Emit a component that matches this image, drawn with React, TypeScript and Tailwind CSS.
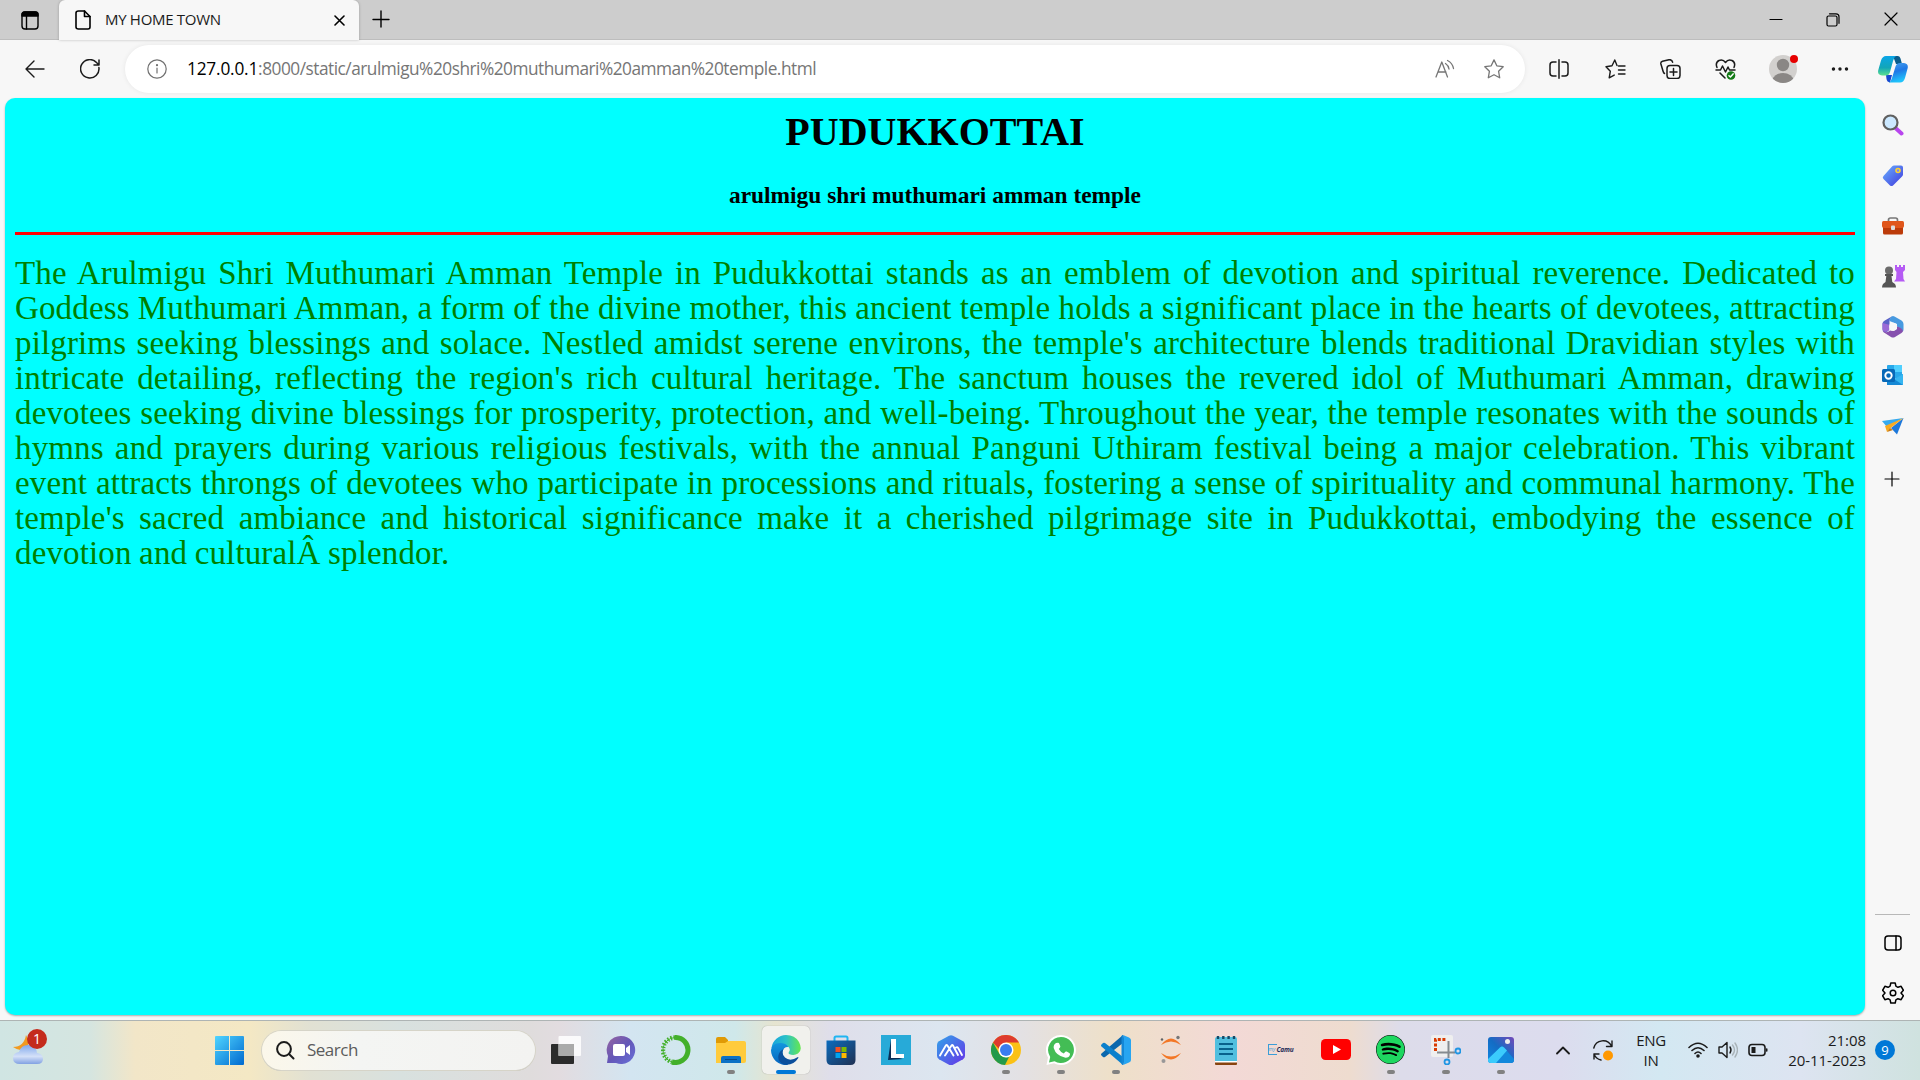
import React from "react";
import { FaSpotify } from "react-icons/fa";

const lines = [
  "The Arulmigu Shri Muthumari Amman Temple in Pudukkottai stands as an emblem of devotion and spiritual reverence. Dedicated to",
  "Goddess Muthumari Amman, a form of the divine mother, this ancient temple holds a significant place in the hearts of devotees, attracting",
  "pilgrims seeking blessings and solace. Nestled amidst serene environs, the temple's architecture blends traditional Dravidian styles with",
  "intricate detailing, reflecting the region's rich cultural heritage. The sanctum houses the revered idol of Muthumari Amman, drawing",
  "devotees seeking divine blessings for prosperity, protection, and well-being. Throughout the year, the temple resonates with the sounds of",
  "hymns and prayers during various religious festivals, with the annual Panguni Uthiram festival being a major celebration. This vibrant",
  "event attracts throngs of devotees who participate in processions and rituals, fostering a sense of spirituality and communal harmony. The",
  "temple's sacred ambiance and historical significance make it a cherished pilgrimage site in Pudukkottai, embodying the essence of",
];

type IconProps = {
  w?: number;
  h?: number;
  vb?: string;
  sw?: number;
  className?: string;
  children: React.ReactNode;
};

function Line({ w = 20, h = 20, vb, sw = 1.4, className = "", children }: IconProps) {
  return (
    <svg
      width={w}
      height={h}
      viewBox={vb ?? `0 0 ${w} ${h}`}
      fill="none"
      stroke="currentColor"
      strokeWidth={sw}
      strokeLinecap="round"
      strokeLinejoin="round"
      className={`block shrink-0 ${className}`}
    >
      {children}
    </svg>
  );
}

function Art({ w = 30, h = 30, vb, className = "", children }: IconProps) {
  return (
    <svg width={w} height={h} viewBox={vb ?? `0 0 ${w} ${h}`} className={`block shrink-0 ${className}`}>
      {children}
    </svg>
  );
}

const star = "M10 .9l2.8 5.9 6.4.9-4.6 4.6 1.1 6.5-5.7-3.1-5.7 3.1 1.1-6.5L.8 7.7l6.4-.9z";

function TabStrip() {
  return (
    <div className="flex h-10 shrink-0 bg-[#cdcdcd] shadow-[inset_0_-1px_0_#bdbdbd]">
      <Line w={18} h={19} className="mt-[11px] ml-[21px]">
        <rect x="1" y="1" width="16" height="17" rx="3" />
        <path d="M1 5V3.500Q1 1 3.500 1h11Q17 1 17 3.500V5z" fill="currentColor" />
        <path d="M5.500 5v13" />
      </Line>
      <div className="ml-5 flex h-10 w-[300px] rounded-t-[6px] bg-[#f7f7f7] shadow-[0_0_3px_rgba(0,0,0,0.25)]">
        <Line w={16} h={20} sw={1.6} className="mt-[10px] ml-4">
          <path d="M3.500 1H9.500L15 6.500V17Q15 19 13 19H3.500Q1 19 1 17V3Q1 1 3.500 1z" />
          <path d="M9.500 1V6.500H15" />
        </Line>
        <div className="ml-[14px] w-[229px] font-['Open_Sans'] text-[15px] leading-[39px] tracking-[-0.3px] whitespace-nowrap text-[#1b1b1b]">
          MY HOME TOWN
        </div>
        <Line w={11} h={11} sw={1.6} className="mt-[15px]">
          <path d="M1 1l9 9M10 1l-9 9" />
        </Line>
      </div>
      <Line w={18} h={18} className="mt-[10px] ml-[13px]">
        <path d="M9 1v16M1 9.500h16" />
      </Line>
      <div className="grow" />
      <Line w={14} h={14} className="mt-3 mr-[43px]" sw={1.2}>
        <path d="M1 7.500h12" />
      </Line>
      <Line w={14} h={14} className="mt-[13px] mr-[44px]" sw={1.2}>
        <rect x="1" y="3" width="10" height="10" rx="1.500" />
        <path d="M3.500 .8h6.500q3 0 3 3v6.500" />
      </Line>
      <Line w={14} h={14} className="mt-[12px] mr-[22px]" sw={1.2}>
        <path d="M1 1l12 12M13 1L1 13" />
      </Line>
    </div>
  );
}

function Toolbar() {
  return (
    <div className="flex h-[58px] shrink-0 items-center text-[#1b1b1b]">
      <Line w={20} h={18} className="ml-[25px]">
        <path d="M19 9H1M9 1L1 9l8 8" />
      </Line>
      <Line className="ml-[35px]" sw={1.5}>
        <path d="M18.900 8.500A9.200 9.200 0 1 1 16.500 3.500L19 6M19 1v5h-5" />
      </Line>
      <div className="ml-[25px] flex h-12 w-[1400px] items-center rounded-full bg-white shadow-[0_0_5px_rgba(0,0,0,0.07)]">
        <Line className="ml-[22px] text-[#707070]" sw={1.2}>
          <circle cx="10" cy="10" r="9.200" />
          <path d="M10 9v5" />
          <circle cx="10" cy="6.200" r=".5" fill="currentColor" />
        </Line>
        <div className="ml-5 w-[1248px] font-['Open_Sans'] text-[17.3px] leading-6 tracking-[-0.5px] whitespace-nowrap text-[#767676]">
          <span className="tracking-[-0.2px] text-black">127.0.0.1</span>:8000/static/arulmigu%20shri%20muthumari%20amman%20temple.html
        </div>
        <Line w={20} h={20} className="text-[#767676]" sw={1.3}>
          <path d="M1 18L6.800 3 12.500 18M3 13h8M10.500 4.500q3 2 3.500 5.500M12.500 1.500q5 2.500 6 8" />
        </Line>
        <Line w={20} h={20} className="ml-[29px] text-[#767676]" sw={1.3}>
          <path d={star} />
        </Line>
      </div>
      <Line w={20} h={20} className="ml-[24px]" sw={1.5}>
        <path d="M7 3H4Q1 3 1 6v8q0 3 3 3h3M10 .8v18.400M13 3h3q3 0 3 3v8q0 3-3 3h-3" />
      </Line>
      <Line w={21} h={20} className="ml-[36px]" sw={1.4}>
        <path d="M12 6.500L9.800 1 7 6.800l-6 .9 4.300 4.600-1.100 6.500 5-2.700M13.500 7H20M13.500 11H20M13.500 15H20" />
      </Line>
      <Line w={21} h={20} className="ml-[34px]" sw={1.5}>
        <rect x="7" y="6.500" width="13" height="13" rx="3" />
        <path d="M13.500 9.500v7M10 13h7M4.500 14.500Q3.500 14 3 12L.9 5Q.4 3 2.500 2.300L9 .7Q12 .4 12.600 3.200" />
      </Line>
      <Line w={21} h={21} className="ml-[34px]" sw={1.5}>
        <path d="M2 8.500Q0 3.500 4 1.500q4-1.500 6.500 2 2.500-3.500 6.500-2 4 2 2 7M1 11h4.500l2-4 3 6 2.500-5 1.500 3H20M5 14l5 5" />
        <circle cx="16" cy="16.500" r="4.300" fill="#137a16" stroke="none" />
        <path d="M14 16.700l1.400 1.200 2.700-3" stroke="white" />
      </Line>
      <div className="relative ml-[33px]">
        <Art w={28} h={28}>
          <clipPath id="avatar"><circle cx="14" cy="14" r="14" /></clipPath>
          <g clipPath="url(#avatar)">
            <rect width="28" height="28" fill="#d2d0ce" />
            <circle cx="14" cy="10" r="6.200" fill="#8a8785" />
            <ellipse cx="14" cy="25.500" rx="10.500" ry="7.500" fill="#8a8785" />
          </g>
        </Art>
        <span className="absolute top-0 left-[21px] size-2 rounded-full bg-[#e60000]" />
      </div>
      <Line w={18} h={6} className="ml-[34px]">
        <circle cx="2.500" cy="3" r="1" fill="currentColor" />
        <circle cx="9" cy="3" r="1" fill="currentColor" />
        <circle cx="15.500" cy="3" r="1" fill="currentColor" />
      </Line>
      <Art w={30} h={27} className="ml-[29px]">
        <defs>
          <linearGradient id="cpA" x1="0" y1="0" x2="0" y2="1">
            <stop offset="0" stopColor="#0aa5e8" /><stop offset=".6" stopColor="#12a6b8" /><stop offset="1" stopColor="#5ce08e" />
          </linearGradient>
          <linearGradient id="cpB" x1="0" y1="0" x2=".3" y2="1">
            <stop offset="0" stopColor="#4aa4ee" /><stop offset=".5" stopColor="#1f78e6" /><stop offset="1" stopColor="#1fc3fb" />
          </linearGradient>
        </defs>
        <path d="M15 0h5q2 0 2.500 2.500L24 8h-6z" fill="#0a5d8c" />
        <path d="M8 19h6l-2 7.500Q9 26 8.500 23z" fill="#1748cf" />
        <path d="M8 0h10q-2 1-3 5l-3 11q-1 3.500-4 3.500H4Q-1 19 .3 14L3 4.500Q4.500 0 8 0z" fill="url(#cpA)" />
        <path d="M22 26.500H11q2-1 3-4.500l3.500-11.500Q18.500 7 22 7h4q4.500.5 3.700 5L27 22q-1.500 4.500-5 4.500z" fill="url(#cpB)" />
      </Art>
    </div>
  );
}

function SideIcons() {
  const cell = "flex h-[50px] shrink-0 items-center justify-center";
  return (
    <div className="flex w-[54px] shrink-0 flex-col pl-px">
      <div className={cell}>
        <Art w={22} h={22} className="mt-1">
          <path d="M14 14.500l5.500 5" stroke="#b845ee" strokeWidth="4" strokeLinecap="round" />
          <circle cx="8.500" cy="8.500" r="7" fill="#cbe8ff" stroke="#606060" strokeWidth="2.200" />
        </Art>
      </div>
      <div className={cell}>
        <Art w={22} h={22} className="mt-[6px]">
          <defs><linearGradient id="tag" x1="0" y1="0" x2="1" y2="1"><stop stopColor="#69b2ff" /><stop offset="1" stopColor="#4038dc" /></linearGradient></defs>
          <path d="M12 .5h7q2 0 2 2v7q0 1-1 2L11 20.500q-1.500 1-3 0L1.500 14Q0 12.500 1.500 11L10 1.500q1-1 2-1z" fill="url(#tag)" />
          <circle cx="16" cy="5.500" r="2" fill="#7686ff" stroke="#ffd12e" strokeWidth="1.600" />
        </Art>
      </div>
      <div className={cell}>
        <Art w={22} h={18} className="mt-[6px]">
          <path d="M6.500 5V3q0-2 2-2h5q2 0 2 2v2" fill="none" stroke="#777" strokeWidth="1.700" />
          <rect x="1" y="7" width="20" height="10.500" rx="1.500" fill="#bc3b0a" />
          <path d="M0 5.500Q0 4 1.500 4h19Q22 4 22 5.500V9q0 2-2 2H2q-2 0-2-2z" fill="#e0561b" />
          <rect x="9" y="8.500" width="4" height="4.500" rx="1" fill="#ddd" />
        </Art>
      </div>
      <div className={cell}>
        <Art w={24} h={24} className="mt-[5px]">
          <path d="M14 1h2v2h2V1h2v2h2V1h2v5l-2 2 .5 7 1.500 2.500H13L15 15l.5-7L14 6z" fill="#b55bf4" />
          <circle cx="8" cy="6.500" r="4" fill="#6b6b6b" />
          <path d="M4 10h8v2h-1.500l.8 6L14 20q1 1.500 1 3.500H1Q1 21.500 2 20l2.500-2 .8-6H4z" fill="#555" />
        </Art>
      </div>
      <div className={cell}>
        <Art w={22} h={23} className="mt-[6px]">
          <path d="M10.500 1L2 6Q.5 7 .5 9v5.500q0 2 1.500 2.500 2 .6 3.500-.5 2.200-1.500 2-4V6.500Q7.500 3 10.500 1z" fill="#5a62c8" />
          <path d="M9.500 1.500q1.500-1 3 0l7 4q2 1.200 2 3.500v5.500q0 1.500-.8 2.300Q19 13 15 11.500V9L7.500 6Q7.500 3 9.500 1.500z" fill="#479ae0" />
          <path d="M15 11.500q5 1 6 4.500-.2 1-1.500 2l-6.500 4q-2 1-4 0L2 17.500q-.8-.5-1-1.500 4 2.500 7-.5l3.500.5 3.500-2z" fill="#8650ae" />
          <path d="M.5 14q.5 3.500 4 2.500 3-1 3-4l.5-2.500L.5 8z" fill="#9b6ad6" />
          <circle cx="11" cy="11.700" r="4" fill="#f7f7f7" />
        </Art>
      </div>
      <div className={cell}>
        <Art w={21} h={21} className="mt-[5px]">
          <rect x="5" y="0" width="15" height="13" rx="1" fill="#28a8ea" />
          <path d="M12 0h8v7h-8z" fill="#50d0ff" />
          <path d="M5 9l8 5 8-5v11H5z" fill="#1588d5" /><path d="M21 9v11l-9-6z" fill="#36b6f1" />
          <rect x="0" y="4" width="13" height="13" rx="1.500" fill="#0869b8" />
          <circle cx="6.500" cy="10.500" r="3.200" fill="none" stroke="white" strokeWidth="1.900" />
        </Art>
      </div>
      <div className={cell}>
        <Art w={22} h={17} className="mt-[6px]">
          <path d="M0 3L21.500 0 5 9z" fill="#35aaf0" /><path d="M21.500 0L15 16.500 9 10z" fill="#1d78da" />
          <path d="M3 8L21.500 0 8 10.500 5 14z" fill="#f7aa20" /><path d="M5 14l3-4 3 2z" fill="#c87912" />
        </Art>
      </div>
      <div className="flex h-[62px] items-center justify-center">
        <Line w={16} h={16} className="-ml-px" sw={1.2}><path d="M8 1v14M1 8h14" /></Line>
      </div>
      <div className="grow" />
      <div className="ml-[9px] h-px w-[35px] shrink-0 bg-[#b8b8b8]" />
      <Line w={18} h={16} className="mt-5 ml-[18px]" sw={1.5}>
        <rect x="1" y="1" width="16" height="14" rx="3" /><path d="M12 1v14" />
      </Line>
      <Line w={22} h={22} vb="1 1 22 22" className="mt-[31px] mb-[16px] ml-[16px]" sw={1.5}>
        <path d="M9.800 2h4.400l.7 3.200 2 1.100 3.200-1 2.300 4-2.400 2.700 2.400 2.700-2.300 4-3.200-1-2 1.100-.7 3.200H9.800l-.7-3.200-2-1.100-3.200 1-2.300-4L4 12 1.600 9.300l2.300-4 3.200 1 2-1.100z" />
        <circle cx="12" cy="12" r="2.800" />
      </Line>
    </div>
  );
}

function PageView() {
  return (
    <main className="ml-[5px] h-[917px] w-[1860px] shrink-0 overflow-hidden rounded-[10px] bg-[#00ffff] px-[10px] font-['Liberation_Serif',serif] text-black shadow-[0_1px_2px_rgba(0,0,0,0.3)]">
      <h1 className="mt-[11px] h-[46px] text-center text-[40px] leading-[46px] font-bold">PUDUKKOTTAI</h1>
      <h3 className="mt-[27px] h-[27px] text-center text-[23.4px] leading-[27px] font-bold">arulmigu shri muthumari amman temple</h3>
      <div className="mt-[23px] h-[3px] bg-[#ff0000]" />
      <div className="mt-[21px] text-[33px] leading-[35px] tracking-[0.14px] text-[#008000] [word-spacing:-0.9px]">
        {lines.map((line) => (
          <div key={line} className="h-[35px] whitespace-nowrap [text-align-last:justify]">{line}</div>
        ))}
        <div className="h-[35px]">devotion and culturalÂ splendor.</div>
      </div>
    </main>
  );
}

function AppCell({ children, run, active }: { children: React.ReactNode; run?: boolean; active?: boolean }) {
  return (
    <div className="relative flex h-[59px] w-[55px] shrink-0 items-center justify-center pb-px">
      <div className={active ? "flex size-12 items-center justify-center rounded-[5px] bg-[#f1f1ed] shadow-[0_0_1px_rgba(0,0,0,0.35)]" : "flex size-12 items-center justify-center"}>
        {children}
      </div>
      {run && <span className="absolute bottom-[6px] h-1 w-2 rounded-full bg-[#818181]" />}
      {active && <span className="absolute bottom-[6px] h-1 w-5 rounded-full bg-[#0078d7]" />}
    </div>
  );
}

function AppIcons() {
  return (
    <>
      <AppCell>
        <Art>
          <rect x="0" y="9" width="23" height="20" rx="1" fill="#2b2b2b" />
          <rect x="7.500" y="1" width="22.500" height="20" rx="1" fill="#fff" opacity=".85" />
          <path d="M7.500 9H23v12H7.500z" fill="#aaa" />
        </Art>
      </AppCell>
      <AppCell>
        <Art>
          <defs><linearGradient id="chat" x1="0" y1="0" x2="1" y2="1"><stop stopColor="#97649f" /><stop offset=".5" stopColor="#6457b8" /><stop offset="1" stopColor="#6870da" /></linearGradient></defs>
          <path d="M15 1a14 14 0 1 1-5 27H1l1-7A14 14 0 0 1 15 1z" fill="url(#chat)" />
          <rect x="7" y="9" width="12" height="12" rx="2" fill="#fff" /><path d="M20 13l4-3v10l-4-3z" fill="#fff" />
        </Art>
      </AppCell>
      <AppCell>
        <Art>
          <path d="M14 2.500A12.500 12.500 0 1 1 11 27" fill="none" stroke="#43b02a" strokeWidth="5" />
          <path d="M14 2.500A12.500 12.500 0 0 0 11 27" fill="none" stroke="#43b02a" strokeWidth="4.500" strokeDasharray="1.500 1.600" />
          <path d="M14 2.500A12.500 12.500 0 0 0 11 27" fill="none" stroke="#43b02a" strokeWidth="1" />
        </Art>
      </AppCell>
      <AppCell run>
        <Art>
          <path d="M0 4q0-2 2-2h7l3 3v5H0z" fill="#e09a05" />
          <path d="M0 8h9l3-2h16q2 0 2 2v18q0 2-2 2H0z" fill="#ffcb3c" />
          <path d="M5 28v-5q0-2 2-2h16q2 0 2 2v5z" fill="#0b71c5" /><path d="M9 24.500h12" stroke="#084a88" />
        </Art>
      </AppCell>
      <AppCell active>
        <Art>
          <defs>
            <linearGradient id="edA"><stop stopColor="#16a2df" /><stop offset=".5" stopColor="#2cc2c8" /><stop offset="1" stopColor="#65e84e" /></linearGradient>
            <linearGradient id="edB" x1="0" y1="0" x2="0" y2="1"><stop stopColor="#1396de" /><stop offset="1" stopColor="#0764be" /></linearGradient>
          </defs>
          <path d="M.5 13A15 15 0 0 1 15 0q9 0 13 7 4 8-1 11.500-4 2.500-9 .5-1-1 .5-3 1-3-2-5Q8 7 .5 13z" fill="url(#edA)" />
          <path d="M0 15q1-7 9-7 6 0 8.500 4-5-.5-6 5-.5 7 6 10l-1 3A15 15 0 0 1 0 15z" fill="url(#edB)" />
          <path d="M12.500 14q-2.500 5 1.500 8.500 5 4.500 13-.5.700 0 .3 1-5 8-14.300 6.500Q6 27 7.500 20q1-4 5-6z" fill="#0b4f9c" />
        </Art>
      </AppCell>
      <AppCell>
        <Art>
          <defs><linearGradient id="store" x1="0" y1="0" x2="1" y2="1"><stop stopColor="#0b6cbe" /><stop offset="1" stopColor="#203052" /></linearGradient></defs>
          <path d="M8.500 6V3q0-1.500 1.500-1.500h10q1.500 0 1.500 1.500v3" fill="none" stroke="#20b5f2" strokeWidth="2" />
          <path d="M.5 5.500h29V25q0 5-5 5h-19q-5 0-5-5z" fill="url(#store)" />
          <path d="M9.500 12h5v5h-5z" fill="#f25022" /><path d="M15.500 12h5v5h-5z" fill="#7fba00" /><path d="M9.500 18h5v5h-5z" fill="#00a4ef" /><path d="M15.500 18h5v5h-5z" fill="#ffb900" />
        </Art>
      </AppCell>
      <AppCell>
        <Art>
          <rect width="30" height="30" fill="#27aad8" />
          <path d="M10 4L7 25l15-1-12-3z" fill="#0a2d55" /><path d="M10 4h5v15h8v4H10z" fill="#fff" />
        </Art>
      </AppCell>
      <AppCell>
        <Art>
          <defs><linearGradient id="mm" x1="0" y1="0" x2="1" y2="1"><stop stopColor="#31a5e9" /><stop offset="1" stopColor="#6732e8" /></linearGradient></defs>
          <path d="M13 .7q2-1 4 0l10 5.500q2 1.300 2 3.500v11q0 2-2 3.500l-10 5.500q-2 1-4 0L3 24.200q-2-1.300-2-3.500v-11Q1 7.500 3 6.200z" fill="url(#mm)" />
          <path d="M4 20.500L9.800 10.500q.8-1 1.600 0L17.500 20.500M9 20.500l6.500-10q.8-1 1.500 0L22 20M20 12.500q1.300-1 2.200.6L26 20" fill="none" stroke="#fff" strokeWidth="1.900" strokeLinecap="round" />
        </Art>
      </AppCell>
      <AppCell run>
        <Art>
          <circle cx="15" cy="15" r="15" fill="#fbc116" />
          <path d="M2 7.500A15 15 0 0 1 28 7.500H15v14z" fill="#de3b2e" />
          <path d="M2 7.500L8.500 19q3 4 9.500 3l-4 8A15 15 0 0 1 2 7.500z" fill="#249a4b" />
          <circle cx="15" cy="15" r="7.500" fill="#fff" /><circle cx="15" cy="15" r="6" fill="#3a7df0" />
        </Art>
      </AppCell>
      <AppCell run>
        <Art>
          <path d="M15 0A15 15 0 1 1 8 28.300L.5 30l1.500-7.500A15 15 0 0 1 15 0z" fill="#fff" />
          <path d="M15 2A13 13 0 1 1 8.500 26.300L3 27.500l1.200-5.500A13 13 0 0 1 15 2z" fill="#43bd55" />
          <path d="M10 8l2-.3q1 0 1.300 1l1 2.500q.2.700-.5 1.500l-1 1.200q2 3.500 5 4.600l1.500-1.700q.6-.6 1.400-.2l2.600 1.300q1 .5.700 1.500-.8 3.300-4.500 3.300Q10 21 7.700 13 7.300 9.500 10 8z" fill="#fff" />
        </Art>
      </AppCell>
      <AppCell run>
        <Art>
          <path d="M22 0v8L4 22q-1 .5-2 0l-1.500-1.500q-1-1 0-2z" fill="#0a67ad" />
          <path d="M22 30v-8L4 8Q3 7.500 2 8L.5 9.500q-1 1 0 2z" fill="#0b80cc" />
          <path d="M22 0l6 2.500Q30 3.500 30 5v20q0 1.500-2 2.500L22 30q1-1 1-3V3q0-2-1-3z" fill="#27a5f1" />
          <path d="M22 0q1 1 1 3v24q0 2-1 3-.8 0-1.500-1V1q.7-1 1.500-1z" fill="#1387d6" />
        </Art>
      </AppCell>
      <AppCell>
        <Art w={24} h={28} className="mt-[-1px]">
          <path d="M2 10q10-13 20 0-10-7-20 0zM2 18q10 7 20 0-10 13-20 0z" fill="#f37726" />
          <circle cx="19" cy="2.500" r="1.700" fill="#767677" /><circle cx="3" cy="4.500" r="1.200" fill="#616262" /><circle cx="4.500" cy="26" r="2" fill="#989798" />
        </Art>
      </AppCell>
      <AppCell>
        <Art w={24} h={30}>
          <rect x="1" y="2" width="22" height="26" rx="2" fill="#50bfdf" />
          <path d="M1 27h22v2q0 1-1 1H2q-1 0-1-1z" fill="#87430f" /><path d="M1 26h22v1.500H1z" fill="#fff" />
          <path d="M5 9h14M5 14h14M5 19h14" stroke="#08628c" strokeWidth="1.800" />
          <path d="M4 1v3M9.300 1v3M14.600 1v3M20 1v3" stroke="#144a68" strokeWidth="2.400" />
        </Art>
      </AppCell>
      <AppCell>
        <div className="flex items-center">
          <div className="flex h-[11px] w-[9px] items-center border border-r-0 border-[#3a9dd8] font-['Open_Sans'] text-[5px] leading-none text-[#3a9dd8] italic">my</div>
          <span className="font-['Open_Sans'] text-[6.5px] leading-[11px] font-bold tracking-[-0.2px] text-[#232a55] italic">Camu</span>
        </div>
      </AppCell>
      <AppCell>
        <Art w={30} h={22}>
          <rect width="30" height="21" rx="4.500" fill="#f00" /><path d="M12 6l8 4.500-8 4.500z" fill="#fff" />
        </Art>
      </AppCell>
      <AppCell run>
        <div className="rounded-full bg-black"><FaSpotify className="size-[29px] text-[#1ed760]" /></div>
      </AppCell>
      <AppCell run>
        <Art>
          <rect x="0" y="0" width="22" height="22" rx="2" fill="#efefef" />
          <path d="M4.500 16V4.500H16" fill="none" stroke="#da3b01" strokeWidth="3" strokeDasharray="3 1.600" />
          <path d="M17.500 6v17M6 17.500h18" stroke="#858b90" strokeWidth="2" />
          <circle cx="27" cy="16" r="2.500" fill="none" stroke="#2196e3" strokeWidth="1.800" /><circle cx="16" cy="27" r="2.500" fill="none" stroke="#2196e3" strokeWidth="1.800" />
        </Art>
      </AppCell>
      <AppCell run>
        <Art w={26} h={26}>
          <defs><linearGradient id="ph" x1="0" y1="1" x2="1" y2="0"><stop stopColor="#0f87e2" /><stop offset=".5" stopColor="#146cc4" /><stop offset="1" stopColor="#7549b8" /></linearGradient></defs>
          <rect width="26" height="26" rx="3" fill="url(#ph)" />
          <path d="M1 24L12 10.500q2-2 4 0L26 22v2q-1 2-3 2H3q-2 0-2-2z" fill="#1288dc" />
          <path d="M0 22L12 10.500q2-2 4 0l3 3L8 26H3q-3 0-3-3z" fill="#3bcbfc" />
          <circle cx="19.500" cy="4.500" r="2.500" fill="#eee" />
        </Art>
      </AppCell>
    </>
  );
}

function Taskbar() {
  return (
    <footer className="flex h-[60px] shrink-0 items-center border-t border-[#aeb4b4] bg-[linear-gradient(90deg,#d0e5e3_0px,#d5e5e0_90px,#f2e6c8_135px,#f4e8c4_250px,#e1e1d3_310px,#d8e1df_400px,#dfdcdc_530px,#e2dce0_560px,#d3e5f1_630px,#cfe8ea_735px,#e6e4d0_775px,#dfdeea_830px,#dce6f0_940px,#e3e1e4_1020px,#eee0c9_1110px,#f3d9d6_1230px,#eedccf_1350px,#dddcea_1400px,#dcdcee_1560px,#d3e8f2_1660px,#dde4f1_1800px,#cfe2df_1920px)] pb-px text-[#1b1b1b]">
      <div className="relative ml-[13px]">
        <Art w={30} h={30}>
          <defs><linearGradient id="cloud" x1="0" y1="0" x2="0" y2="1"><stop stopColor="#81a9ec" /><stop offset=".6" stopColor="#d4e0f8" /><stop offset="1" stopColor="#81a1e2" /></linearGradient></defs>
          <path d="M13 0q5 8 0 14Q7 17 0 12q11 0 13-12z" fill="#f29a20" />
          <path d="M7 29q-7 0-7-6 0-5 6-6 2-7 9-7 8 0 9 8 6 1 6 6 0 5-6 5z" fill="url(#cloud)" />
        </Art>
        <span className="absolute -top-[6px] left-[14px] size-5 rounded-full bg-[#c42b1c] text-center font-['Open_Sans'] text-[14px] leading-5 text-white">1</span>
      </div>
      <Art w={29} h={29} className="ml-[172px]">
        <defs><linearGradient id="win" gradientUnits="userSpaceOnUse" x1="0" y1="0" x2="29" y2="29"><stop stopColor="#50d5ff" /><stop offset="1" stopColor="#0069cf" /></linearGradient></defs>
        <path d="M1 0h13v14H0V1q0-1 1-1zM15 0h13q1 0 1 1v13H15zM0 15h14v14H1q-1 0-1-1zM15 15h14v13q0 1-1 1H15z" fill="url(#win)" />
      </Art>
      <div className="ml-[18px] flex h-[39px] w-[273px] items-center rounded-full bg-[linear-gradient(90deg,#fbf7ea,#f4f5f3_35%,#f3f3f1)] shadow-[0_0_0_1px_#d6d4c8,0_1px_0_#b5b5b0]">
        <Line w={19} h={19} className="ml-[14px]" sw={2}>
          <circle cx="8" cy="8" r="6.900" /><path d="M13 13l4.500 4.500" />
        </Line>
        <span className="ml-3 font-['Open_Sans'] text-[17px] leading-6 tracking-[-0.5px] text-[#5c5c5c]">Search</span>
      </div>
      <div className="ml-[3px] flex"><AppIcons /></div>
      <Line w={14} h={9} className="ml-[28px]" sw={1.8}><path d="M1 7.500L7 1.500l6 6" /></Line>
      <Line w={21} h={21} className="ml-[23px]" sw={1.4}>
        <path d="M.8 8A9.500 9.500 0 0 1 18.500 6M19 1v5.500h-5.500M1 19v-5h5M1 14q2 5 7 6" />
        <circle cx="15" cy="15.500" r="5" fill="#ff9800" stroke="none" />
      </Line>
      <div className="ml-[20px] w-[34px] text-center font-['Open_Sans'] text-[15px] leading-5 tracking-[-0.3px]">ENG<br />IN</div>
      <Line w={20} h={16} className="ml-[20px]" sw={1.6}>
        <path d="M1 5.500q9-8.500 18 0M4 8.500q6-5.500 12 0M7 11.500q3-3 6 0" /><circle cx="10" cy="14" r="1" fill="currentColor" />
      </Line>
      <Line w={20} h={18} className="ml-[10px]" sw={1.4}>
        <path d="M1 6h3l5-4.500v15L4 12H1z" /><path d="M12 6q2 3 0 6" /><path d="M14.500 4q4 5 0 10M17 2q5 7 0 14" stroke="#a9b3b8" />
      </Line>
      <Line w={20} h={14} className="ml-[10px]" sw={1.6}>
        <rect x="1" y="1.500" width="16" height="11" rx="3" /><rect x="3.500" y="4" width="4" height="6" fill="currentColor" stroke="none" /><path d="M18.700 6v2" />
      </Line>
      <div className="ml-[8px] w-[90px] text-right font-['Open_Sans'] text-[15px] leading-5 tracking-[-0.05px]">21:08<br />20-11-2023</div>
      <div className="ml-[9px] size-5 rounded-full bg-[#0078d7] text-center font-['Open_Sans'] text-[13px] leading-5 text-white">9</div>
    </footer>
  );
}

export default function App() {
  return (
    <div className="flex h-[1080px] w-[1920px] flex-col overflow-hidden bg-[#f7f7f7]">
      <TabStrip />
      <Toolbar />
      <div className="flex h-[922px] shrink-0">
        <PageView />
        <SideIcons />
      </div>
      <Taskbar />
    </div>
  );
}
